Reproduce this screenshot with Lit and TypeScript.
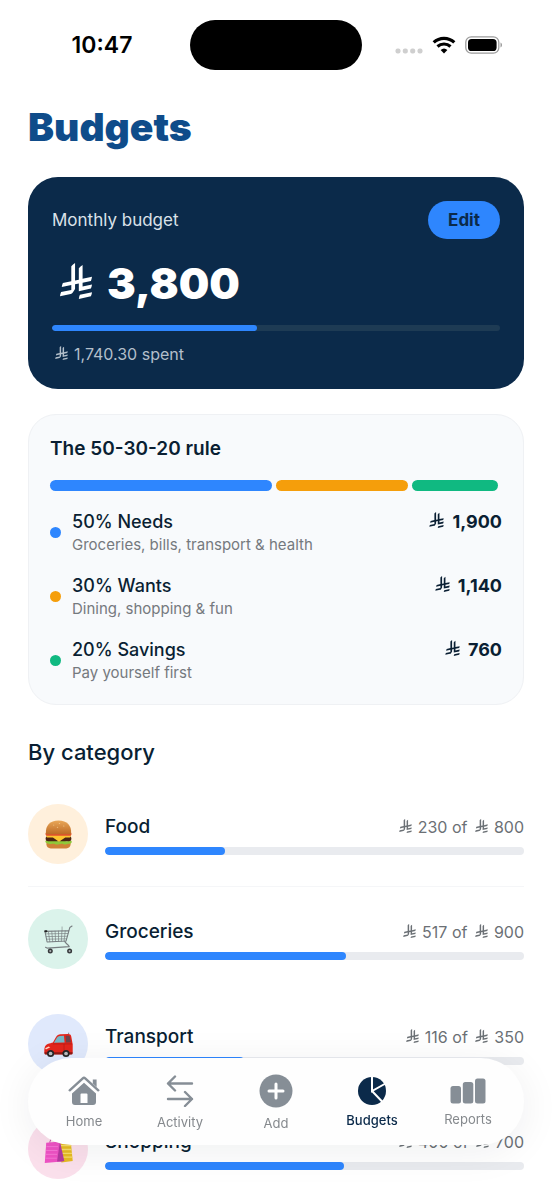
import { LitElement, html, css, svg, nothing } from "lit";
import { customElement, property } from "lit/decorators.js";
import { classMap } from "lit/directives/class-map.js";
import { styleMap } from "lit/directives/style-map.js";

interface RuleShare {
  tone: string;
  title: string;
  hint: string;
  amount: string;
}

interface Category {
  id: string;
  name: string;
  spent: number;
  limit: number;
}

interface Tab {
  id: string;
  label: string;
  active?: boolean;
}

const BUDGET = { limit: 3800, spent: 1740.3 };

const SHARES: RuleShare[] = [
  { tone: "needs", title: "50% Needs", hint: "Groceries, bills, transport & health", amount: "1,900" },
  { tone: "wants", title: "30% Wants", hint: "Dining, shopping & fun", amount: "1,140" },
  { tone: "savings", title: "20% Savings", hint: "Pay yourself first", amount: "760" },
];

const CATEGORIES: Category[] = [
  { id: "food", name: "Food", spent: 230, limit: 800 },
  { id: "groceries", name: "Groceries", spent: 517, limit: 900 },
  { id: "transport", name: "Transport", spent: 116, limit: 350 },
  { id: "shopping", name: "Shopping", spent: 400, limit: 700 },
];

const TABS: Tab[] = [
  { id: "home", label: "Home" },
  { id: "activity", label: "Activity" },
  { id: "add", label: "Add" },
  { id: "budgets", label: "Budgets", active: true },
  { id: "reports", label: "Reports" },
];

/** Saudi riyal currency mark, inline with the text that follows it. */
@customElement("riyal-sign")
export class RiyalSign extends LitElement {
  static styles = css`
    :host { display: inline; }
    svg { width: 13px; height: 14px; margin: 0 6px 0 3px; fill: currentColor; vertical-align: baseline; }
    :host([size="md"]) svg { width: 15px; height: 16px; margin: 0 8px 0 2px; }
    :host([size="lg"]) svg { width: 32px; height: 36px; margin: 0 15px 0 8px; }
  `;
  render() {
    return html`<svg viewBox="0 0 1124 1257" role="img" aria-label="SAR">
      <path d="M699.6 1113c-20 44.500-33.300 92.800-38.400 143.400l424.500-90.200c20-44.500 33.300-92.800 38.400-143.400l-424.500 90.200Z" />
      <path d="M1085.700 895.800c20-44.500 33.300-92.800 38.400-143.400l-330.700 70.300V687.500l292.300-62.100c20-44.500 33.300-92.800 38.400-143.400l-330.700 70.300V66.100c-50.600 28.500-95.600 66.300-132.200 111v403.300l-132.300 28.200V0c-50.600 28.400-95.600 66.300-132.200 111v525.700L100.800 699.600c-20 44.500-33.300 92.800-38.400 143.400l334.300-71.100v170.300L38.400 1018.300C18.400 1062.800 5.100 1111.100 0 1161.700l375-79.700c30.600-6.400 56.800-24.400 73.900-49.200l68.800-102c7.100-10.600 11.300-23.300 11.300-37V743.800l132.200-28.100v270.400l424.500-90.300Z" />
    </svg>`;
  }
}

@customElement("progress-bar")
export class ProgressBar extends LitElement {
  static styles = css`
    :host { display: block; }
    .track { height: 8px; border-radius: 4px; background: #e9ebef; overflow: hidden; }
    .fill { height: 100%; border-radius: 4px; background: #2e86fe; }
    :host([dark]) .track { height: 6px; background: #1e3b54; }
  `;
  @property({ type: Number }) value = 0;
  @property({ type: Number }) max = 100;
  @property() label = "";
  render() {
    const width = `${(this.value / this.max) * 100}%`;
    return html`<div class="track" role="progressbar" aria-label=${this.label}
      aria-valuenow=${this.value} aria-valuemax=${this.max}>
      <div class="fill" style=${styleMap({ width })}></div>
    </div>`;
  }
}

const burger = svg`
  <defs>
    <linearGradient id="bun" x1="0" y1="0" x2="0" y2="1">
      <stop offset="0" stop-color="#e9a758" /><stop offset="1" stop-color="#bd6a25" />
    </linearGradient>
  </defs>
  <path d="M2.500 23h25v2.200c0 2.400-1.900 4.300-4.500 4.300H7c-2.600 0-4.500-1.900-4.500-4.300Z" fill="#cf8238" />
  <path d="M1.500 21.500c2-.6 3.500.3 5 .3s2.500-.8 4.300-.8 2.600 1.100 4.400 1.100 2.800-1 4.600-1 2.400.8 4 .8 2.900-.9 4.700-.4c.7 1.800-.3 3.300-2.200 3.100-1.600-.2-2.300.8-4.200.7-1.800 0-2.400-1-4.400-.8-1.900.2-2.700 1-4.600.8-1.900-.1-2.500-1-4.300-.8-1.900.2-3.300.6-5.100-.2-1.700-.6-2.600-1.300-2.200-2.800Z" fill="#8fc93a" />
  <rect x="1.700" y="16.500" width="26.600" height="5.600" rx="2.600" fill="#4a2413" />
  <path d="M2 15.500h26l-1 2.500-5 .2-6.500 4.200-6.300-4.200-6.200-.2Z" fill="#fdc42f" />
  <path d="M1.800 13.200h26.400c.8 2-.2 3.200-2 3.200H3.800c-1.800 0-2.800-1.200-2-3.200Z" fill="#e2502f" />
  <path d="M2 13.600C1.400 6 6 .5 15 .5s13.600 5.500 13 13.100c-.1.900-.8 1.200-1.800 1.200H3.800c-1 0-1.700-.3-1.800-1.200Z" fill="url(#bun)" />
  <g fill="#f3cd92"><ellipse cx="10" cy="5.300" rx=".8" ry=".5" /><ellipse cx="16" cy="3.600" rx=".8" ry=".5" /><ellipse cx="20.500" cy="6.200" rx=".8" ry=".5" /><ellipse cx="14" cy="7.500" rx=".8" ry=".5" /></g>`;

const cart = svg`
  <g fill="none" stroke="#777d80" stroke-linecap="round" stroke-linejoin="round">
    <path d="M29 1 26.700 2.600 22.800 16.600 3.200 17.600 1 6.600 25.300 6" stroke-width="1.100" />
    <path d="M1.600 9.200 24.700 8.800M2.200 12 24 11.600M2.700 14.700 23.300 14.300M4.500 6.600 6 17.300M8 6.500l1 10.800M11.500 6.400l.5 10.700M15 6.300v10.600M18.500 6.200 18 16.800M22 6.100 20.700 16.700" stroke-width=".7" />
    <path d="M21.500 16.700c.2 2.600 3.800 3 4.600 5.700L3.600 24l-2-1" stroke-width="1.200" />
    <path d="M18.700 2v4.200" stroke-width=".6" />
  </g>
  <rect x=".4" y="5.500" width="3" height="2" rx=".5" fill="#222" />
  <g fill="#35383a"><circle cx="6.500" cy="27" r="2.600" /><circle cx="26.500" cy="27" r="2.600" /></g>
  <g fill="#a9aeb0"><circle cx="6.500" cy="27" r="1.100" /><circle cx="26.500" cy="27" r="1.100" /></g>`;

const car = svg`
  <path d="M25.500 5.500V2.800" stroke="#555" stroke-width=".7" />
  <path d="M.3 21.500c0-3.600.8-6 3.500-7 2-.8 4-.9 5.400-1.500L12.600 7c1-1.800 2.400-2.500 4.400-2.600l7.800-.2c2 0 3 .8 3.400 2.400L29.700 15v7.500c0 1.700-.8 2.700-2.600 2.700H2.600C.9 25.200.3 24.200.3 22.700Z" fill="#e3261c" />
  <path d="M10.200 13.200 13.500 7.800c.7-1.100 1.600-1.600 2.800-1.700l4.300-.2.700 7Z" fill="#75b8c6" />
  <path d="M22.400 6l2.700-.1c1.100 0 1.500.4 1.700 1.300l1.100 5.400-5 .3Z" fill="#71434a" />
  <path d="M9 14.400h20.200M20.700 14.500v8" stroke="#b1170f" stroke-width=".6" fill="none" />
  <path d="M1.200 18.800l3.600-1.800 1.700.9-4.500 2.300Z" fill="#ffd9c7" />
  <path d="M.6 23h29v1.400c0 .8-.7 1-1.500 1H2c-1 0-1.400-.3-1.400-1Z" fill="#8e1812" />
  <g fill="#262728"><circle cx="6.800" cy="24.300" r="3.700" /><circle cx="22.800" cy="24.300" r="3.700" /></g>
  <g fill="#b9bdc0"><circle cx="6.800" cy="24.300" r="1.900" /><circle cx="22.800" cy="24.300" r="1.900" /></g>`;

const bags = svg`
  <path d="M16 6c1-5 8-6 8.500-.5" fill="none" stroke="#c49a1c" stroke-width="1" />
  <path d="M14.500 6.500 27.500 5l2.200 22-11.700 1.500Z" fill="#e6bb22" />
  <path d="M16 11h12.200M17 15h11.600M17 19h12M17 23h12.300" stroke="#f6dc68" stroke-width="1.300" />
  <path d="M6 8c.4-6.500 9-6.800 9.500-1" fill="none" stroke="#bb4a9e" stroke-width="1" />
  <path d="M2.300 8 16.500 6.800l2 20.700L.8 29Z" fill="#ee52c4" />
  <path d="m16.500 6.800 4.500 20-2.500.7-5-.2Z" fill="#b33aa0" />
  <path d="M2.500 12h12M2.200 16h11.700M1.800 20h11.700M1.400 24h11.800" stroke="#f77bd8" stroke-width=".9" />`;

const PICTURES: Record<string, unknown> = { food: burger, groceries: cart, transport: car, shopping: bags };

@customElement("category-row")
export class CategoryRow extends LitElement {
  static styles = css`
    :host { display: flex; align-items: center; gap: 17px; padding: 22px 0; border-bottom: 1px solid transparent; }
    .badge { display: grid; place-items: center; flex: none; width: 60px; height: 60px; border-radius: 50%; }
    .badge svg { width: 29px; height: 29px; }
    .food { background: #fff0dc; }
    .groceries { background: #dbf3eb; }
    .transport { background: #e0e9fc; }
    .shopping { background: #fbe0ec; }
    .body { flex: 1; min-width: 0; }
    .line { display: flex; justify-content: space-between; align-items: center; margin-bottom: 6px; line-height: 28px; }
    .name { margin: 0; font-size: 19px; font-weight: 500; color: #0a1f33; }
    .figures { font-size: 16px; color: #6b7075; }
  `;
  @property({ attribute: false }) category!: Category;
  render() {
    const { id, name, spent, limit } = this.category;
    return html`
      <div class="badge ${id}"><svg viewBox="0 0 30 30" aria-hidden="true">${PICTURES[id]}</svg></div>
      <div class="body">
        <div class="line">
          <h3 class="name">${name}</h3>
          <span class="figures"><riyal-sign></riyal-sign>${spent} of <riyal-sign></riyal-sign>${limit}</span>
        </div>
        <progress-bar .value=${spent} .max=${limit} .label=${name}></progress-bar>
      </div>`;
  }
}

const TAB_ICONS: Record<string, unknown> = {
  home: html`<svg width="32" height="30" viewBox="0 0 32 30" aria-hidden="true">
    <path d="M1.700 14.300 14.800 2.400a1.800 1.800 0 0 1 2.400 0l13.100 11.900" fill="none" stroke="currentColor" stroke-width="2.400" stroke-linecap="round" stroke-linejoin="round" />
    <path d="M24.800 3.600h3.800V11l-3.800-3.400Z" fill="currentColor" />
    <path fill-rule="evenodd" d="M16 6.800 28 17.500V26a3 3 0 0 1-3 3H7a3 3 0 0 1-3-3v-8.500ZM12.500 18.500V27h7v-8.500a1 1 0 0 0-1-1h-5a1 1 0 0 0-1 1Z" fill="currentColor" />
  </svg>`,
  activity: html`<svg width="28" height="32" viewBox="0 0 28 32" fill="none" stroke="currentColor" stroke-width="2.400" stroke-linecap="round" stroke-linejoin="round" aria-hidden="true">
    <path d="M26 8.500H2M9 1.500l-7 7 7 7M2 24h24M19 17l7 7-7 7" />
  </svg>`,
  add: html`<svg width="34" height="34" viewBox="0 0 34 34" aria-hidden="true">
    <circle cx="17" cy="17" r="16.500" fill="currentColor" />
    <path d="M17 10v14M10 17h14" stroke="#fff" stroke-width="3" stroke-linecap="round" />
  </svg>`,
  budgets: html`<svg width="28" height="28" viewBox="0 0 28 28" aria-hidden="true">
    <circle cx="14" cy="14" r="14" fill="currentColor" />
    <path d="M14 -1v15l13.500-7.500M14 14l10.500 11" fill="none" stroke="#fff" stroke-width="2" />
  </svg>`,
  reports: html`<svg width="36" height="26" viewBox="0 0 36 26" fill="currentColor" aria-hidden="true">
    <rect x=".5" y="8" width="10.500" height="17.500" rx="2.500" />
    <rect x="12.800" y="4" width="10.500" height="21.500" rx="2.500" />
    <rect x="25" y=".5" width="10.500" height="25" rx="2.500" />
  </svg>`,
};

@customElement("tab-bar")
export class TabBar extends LitElement {
  static styles = css`
    :host { position: fixed; left: 28px; right: 28px; bottom: 55px; }
    .bar { display: grid; grid-template-columns: repeat(5, 1fr); box-sizing: border-box; height: 87px; padding: 0 8px; border-radius: 44px; background: #fefefe; box-shadow: 0 6px 40px rgba(20, 30, 45, 0.07); }
    .tab { display: flex; flex-direction: column; align-items: center; justify-content: center; gap: 9px; color: #868e96; font-size: 13px; line-height: 12px; text-decoration: none; }
    .tab svg { display: block; }
    .label { color: #85898d; }
    .active, .active .label { color: #0b2a4a; font-weight: 500; }
  `;
  render() {
    return html`<nav class="bar" aria-label="Main">
      ${TABS.map((t) => html`<a href="#${t.id}" class=${classMap({ tab: true, active: !!t.active })}
        aria-current=${t.active ? "page" : nothing}>${TAB_ICONS[t.id]}<span class="label">${t.label}</span></a>`)}
    </nav>`;
  }
}

@customElement("status-bar")
export class StatusBar extends LitElement {
  static styles = css`
    :host { display: grid; grid-template-columns: 1fr 172px 1fr; align-items: center; padding-top: 20px; color: #000; }
    .time { padding-left: 14px; text-align: center; font-size: 23px; font-weight: 600; line-height: 28px; }
    .island { height: 50px; border-radius: 25px; background: #000; }
    .signals { display: flex; align-items: center; justify-content: center; gap: 9px; padding-right: 16px; }
    .signals svg { display: block; }
  `;
  render() {
    return html`
      <div class="time">10:47</div>
      <div class="island"></div>
      <div class="signals">
        <svg width="28" height="18" viewBox="0 0 28 18" fill="#cfcfcf" aria-hidden="true">
          <rect x=".5" y="12.500" width="5" height="5" rx="2" /><rect x="7.800" y="12.500" width="5" height="5" rx="2" />
          <rect x="15.200" y="12.500" width="5" height="5" rx="2" /><rect x="22.500" y="12.500" width="5" height="5" rx="2" />
        </svg>
        <svg width="24" height="18" viewBox="0 0 24 18" aria-hidden="true">
          <path d="M1.700 6.400a15 15 0 0 1 20.600 0" fill="none" stroke="#000" stroke-width="3.200" />
          <path d="M5.500 10.500a9.500 9.500 0 0 1 13 0" fill="none" stroke="#000" stroke-width="3.100" />
          <path d="M12 17.500 8.600 14a5 5 0 0 1 6.800 0Z" fill="#000" />
        </svg>
        <svg width="38" height="18" viewBox="0 0 38 18" aria-hidden="true">
          <rect x=".8" y=".8" width="33" height="16.400" rx="5.500" fill="none" stroke="#9b9b9b" stroke-width="1.300" />
          <rect x="3" y="3" width="28.600" height="12" rx="3.600" fill="#000" />
          <path d="M35.500 6.500c2 .8 2 4.200 0 5Z" fill="#9b9b9b" />
        </svg>
      </div>`;
  }
}

@customElement("app-root")
export class AppRoot extends LitElement {
  static styles = css`
    :host { display: block; min-height: 100vh; background: #fff; color: #0a1f33; font-family: Inter, "Noto Sans", sans-serif; }
    .page { padding: 0 28px; }
    h1, h2, p, ul { margin: 0; padding: 0; }
    ul { list-style: none; }
    .title { padding: 34px 0 27px; font-size: 39px; font-weight: 900; line-height: 46px; color: #0f4c8a; }

    .budget { padding: 24px 24px 25px; border-radius: 30px; background: #0b2a4a; color: #fff; }
    .budget-head { display: flex; align-items: center; justify-content: space-between; }
    .budget-label { font-size: 17px; font-weight: 400; line-height: 24px; color: #dbe2e9; }
    .edit { width: 72px; height: 38px; padding: 0; border: 0; border-radius: 19px; background: #2e86fe; color: #0b2a4a; font: 700 17px Inter, sans-serif; }
    .amount { margin: 22px 0 20px; font-size: 43px; font-weight: 900; line-height: 44px; }
    .spent { margin-top: 13px; font-size: 16px; line-height: 20px; color: #b3bfca; }

    .rule { margin-top: 25px; padding: 21px; border: 1px solid #eff1f4; border-radius: 28px; background: #f8fafc; }
    .rule-title { font-size: 19px; font-weight: 600; line-height: 26px; }
    .split { display: grid; grid-template-columns: 222fr 132fr 86fr; gap: 4px; margin: 18px 4px 19px 0; }
    .part { height: 11px; border-radius: 6px; }
    .needs { background: #2e86fe; }
    .wants { background: #f59e0b; }
    .savings { background: #10b981; }
    .shares { display: grid; gap: 19px; }
    .share { display: grid; grid-template-columns: 11px 1fr auto; column-gap: 11px; align-items: start; }
    .dot { align-self: center; height: 11px; border-radius: 50%; }
    .share-title { font-size: 18px; font-weight: 500; line-height: 24px; }
    .hint { font-size: 15px; line-height: 21px; color: #75797e; }
    .share-amount { font-size: 18px; font-weight: 700; line-height: 24px; }

    .section-title { margin: 33px 0 16px; font-size: 22px; font-weight: 500; line-height: 28px; }
    .categories > li:first-child category-row { border-color: #f5f6f8; }
  `;
  render() {
    return html`
      <status-bar></status-bar>
      <main class="page">
        <h1 class="title">Budgets</h1>

        <section class="budget">
          <div class="budget-head">
            <h2 class="budget-label">Monthly budget</h2>
            <button class="edit" type="button">Edit</button>
          </div>
          <p class="amount"><riyal-sign size="lg"></riyal-sign>${BUDGET.limit.toLocaleString("en-US")}</p>
          <progress-bar dark .value=${BUDGET.spent} .max=${BUDGET.limit} .label=${"Monthly budget"}></progress-bar>
          <p class="spent"><riyal-sign></riyal-sign>${BUDGET.spent.toLocaleString("en-US", { minimumFractionDigits: 2 })} spent</p>
        </section>

        <section class="rule">
          <h2 class="rule-title">The 50-30-20 rule</h2>
          <div class="split">${SHARES.map((s) => html`<div class="part ${s.tone}"></div>`)}</div>
          <ul class="shares">
            ${SHARES.map((s) => html`<li class="share">
              <span class="dot ${s.tone}"></span>
              <div>
                <p class="share-title">${s.title}</p>
                <p class="hint">${s.hint}</p>
              </div>
              <span class="share-amount"><riyal-sign size="md"></riyal-sign>${s.amount}</span>
            </li>`)}
          </ul>
        </section>

        <h2 class="section-title">By category</h2>
        <ul class="categories">
          ${CATEGORIES.map((c) => html`<li><category-row .category=${c}></category-row></li>`)}
        </ul>
      </main>
      <tab-bar></tab-bar>`;
  }
}
